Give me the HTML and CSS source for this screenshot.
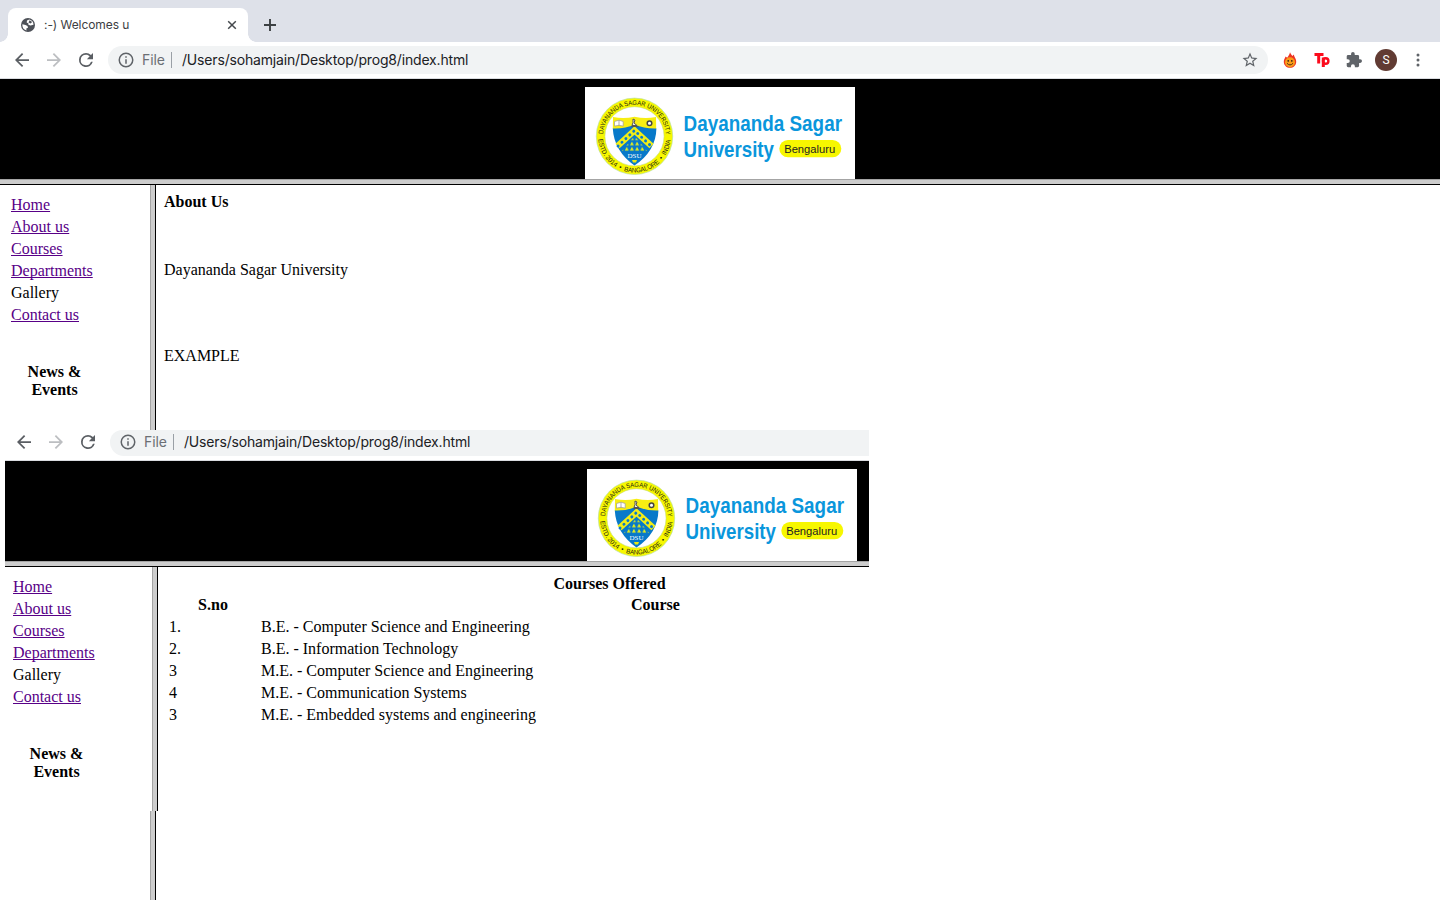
FILE: index.html
```html
<!DOCTYPE html>
<html lang="en">
<head>
<meta charset="utf-8">
<title>:-) Welcomes u</title>
<link rel="stylesheet" href="styles.css">
</head>
<body>
<svg class="defs" width="0" height="0" aria-hidden="true">
  <defs>
    <pattern id="dots" width="5.2" height="5.2" patternUnits="userSpaceOnUse" patternTransform="translate(49.5 49)">
      <path d="M2.6 .5L4.500 4.200H.7z" fill="#e6ee1c"/>
    </pattern>
    <path id="arc-top" d="M18.1 49.3A31.4 31.4 0 0 1 80.9 49.3"/>
    <path id="arc-bottom" d="M13.3 49.3A36.2 36.2 0 0 0 85.7 49.3"/>
  </defs>
  <symbol id="back" viewBox="0 0 24 24"><path d="M20 11H7.83l5.59-5.59L12 4l-8 8 8 8 1.41-1.41L7.83 13H20z"/></symbol>
  <symbol id="forward" viewBox="0 0 24 24"><path d="M12 4l-1.41 1.41L16.17 11H4v2h12.17l-5.58 5.59L12 20l8-8z"/></symbol>
  <symbol id="reload" viewBox="0 0 24 24"><path d="M17.65 6.35A7.96 7.96 0 0 0 12 4a8 8 0 1 0 7.73 10h-2.08A6 6 0 1 1 12 6c1.66 0 3.14.69 4.22 1.78L13 11h7V4z"/></symbol>
  <symbol id="info" viewBox="0 0 24 24"><path d="M11 17h2v-6h-2zm1-15a10 10 0 1 0 0 20 10 10 0 0 0 0-20zm0 18a8 8 0 1 1 0-16 8 8 0 0 1 0 16zM11 9h2V7h-2z"/></symbol>
  <symbol id="crest" viewBox="0 0 270 92">
    <circle cx="49.5" cy="49.3" r="38.2" fill="#f7f700" stroke="#b9dfa0" stroke-width=".7"/>
    <circle cx="49.5" cy="49.3" r="29.6" fill="#fff" stroke="#c5dc70" stroke-width=".6"/>
    <path d="M28 30Q39 32 49.5 29.7Q60 32 71 30L71.2 42H27.8z" fill="#f7ee13"/>
    <path d="M27.8 41.5Q40 42 49.5 37.5Q60 42 71.4 41.5Q71 64 49.5 78.5Q29 64 27.8 41.5z" fill="#0879c9"/>
    <path d="M36 65L49.5 49L63 65z" fill="url(#dots)"/>
    <path d="M32.5 59L49.5 43.5L66.5 59" fill="none" stroke="#f0ed18" stroke-width="6.2"/>
    <path d="M33 59L49.5 43.5L66 59" fill="none" stroke="#0879c9" stroke-width="2.9" stroke-linecap="round" stroke-dasharray=".1 5.3"/>
    <path d="M29.5 34.5l4.5-1.3 4.2 1.3v4.6l-4.2-.8-4.5.8z" fill="#fff" stroke="#999" stroke-width=".7"/>
    <path d="M34 33.5v5" stroke="#777" stroke-width=".6"/>
    <path d="M46.3 39.5h7M48 32l2 1-1 3 3 2.500h-5l1-3z" fill="#eee" stroke="#555" stroke-width="1"/>
    <circle cx="64.5" cy="36.2" r="2.3" fill="#fff" stroke="#444" stroke-width="1.5"/>
    <path d="M47 73h5l-1 2.500h-3z" fill="#e8e915"/>
  </symbol>
</svg>

<div class="window">
  <div class="tabstrip">
    <div class="tab">
      <svg class="globe" viewBox="0 0 14 14"><circle cx="7" cy="7" r="7" fill="#4d5158"/><path d="M8.200 1.500L6 2.500 5.700 4.500 7.500 5.500 7.300 6.800 9.500 7.600 12.500 6.800A5.600 5.600 0 0 0 8.200 1.500zM1.400 6.300L4.500 7 6.500 8 7 9.700 5.300 10.500 5.500 12.400A5.600 5.600 0 0 1 1.400 6.300z" fill="#fff"/><path d="M8.600 2.300l2.600 1.800-1.700 1.500-2-1z" fill="#4d5158"/></svg>
      <span class="tab-title">:-) Welcomes u</span>
      <svg class="tab-close" viewBox="0 0 10 10"><path d="M1.200 1.200l7.600 7.600M8.800 1.200L1.200 8.800"/></svg>
    </div>
    <svg class="new-tab" viewBox="0 0 12 12"><path d="M6 0v12M0 6h12"/></svg>
  </div>
  <div class="toolbar">
    <svg class="nav"><use href="#back"/></svg>
    <svg class="nav dim"><use href="#forward"/></svg>
    <svg class="nav"><use href="#reload"/></svg>
    <div class="omnibox">
      <svg class="info"><use href="#info"/></svg>
      <span class="scheme">File</span>
      <span class="url">/Users/sohamjain/Desktop/prog8/index.html</span>
      <svg class="star" viewBox="0 0 24 24"><path d="M22 9.240l-7.190-.62L12 2 9.190 8.630 2 9.240l5.460 4.730L5.820 21 12 17.270 18.180 21l-1.630-7.030zM12 15.400l-3.760 2.270 1-4.280-3.320-2.880 4.380-.38L12 6.100l1.710 4.040 4.380.38-3.320 2.880 1 4.280z"/></svg>
    </div>
    <div class="extensions">
      <svg width="16" height="16" viewBox="0 0 16 16"><path d="M8 .3C8.600 2 9.500 2.500 10.300 4L12 2.500C11.800 5 14.500 6.500 14.200 10 14 13.500 11.300 15.800 8 15.800S2 13.500 1.800 10C1.700 7.500 3 6.500 3.600 4.500L5.200 5.800C6.300 4 7.500 2.800 8 .3z" fill="#ee3423"/><circle cx="8" cy="10.300" r="5" fill="#f99b18"/><path d="M5 11.300Q8 14.500 11 11.300" fill="none" stroke="#543018" stroke-width="1"/><path d="M6.200 7.900v1.800M9.800 7.900v1.800" stroke="#35211a" stroke-width="1.300"/></svg>
      <svg width="16" height="16" viewBox="0 0 16 16"><path d="M.5 2.500H9.500M4.700 2.500V11.500M9.300 5.500V15" fill="none" stroke="#fb0b1c" stroke-width="3"/><circle cx="11.700" cy="9" r="2.700" fill="none" stroke="#fb0b1c" stroke-width="2.400"/></svg>
      <svg width="16" height="16" viewBox="1 1 22 22" fill="#5f6368"><path d="M20.500 11H19V7a2 2 0 0 0-2-2h-4V3.500a2.500 2.500 0 0 0-5 0V5H4a2 2 0 0 0-2 2v3.800h1.500a2.700 2.700 0 0 1 0 5.400H2V20a2 2 0 0 0 2 2h3.800v-1.500a2.700 2.700 0 0 1 5.400 0V22H17a2 2 0 0 0 2-2v-4h1.500a2.500 2.500 0 0 0 0-5z"/></svg>
      <span class="avatar">S</span>
      <svg class="menu" viewBox="0 0 4 14"><circle cx="2" cy="2" r="1.500"/><circle cx="2" cy="7" r="1.500"/><circle cx="2" cy="12" r="1.500"/></svg>
    </div>
  </div>

  <header class="banner">
    <svg class="logo" viewBox="0 0 270 92">
      <use href="#crest"/>
      <text class="dsu" x="42.500" y="70.800" textLength="14">DSU</text>
      <text class="ring-text"><textPath href="#arc-top" startOffset="2" textLength="95" lengthAdjust="spacingAndGlyphs">DAYANANDA SAGAR UNIVERSITY</textPath></text>
      <text class="ring-text"><textPath href="#arc-bottom" startOffset="3" textLength="107" lengthAdjust="spacingAndGlyphs">ESTD. 2014 &#160;•&#160; BANGALORE &#160;•&#160; INDIA</textPath></text>
      <text class="logo-name" x="98.500" y="43.700" textLength="158.500" lengthAdjust="spacingAndGlyphs">Dayananda Sagar</text>
      <text class="logo-name" x="98.500" y="70" textLength="90.500" lengthAdjust="spacingAndGlyphs">University</text>
      <rect x="194.300" y="53" width="62" height="17.300" rx="8.650" fill="#f7f700"/>
      <text class="logo-city" x="199.200" y="65.700" textLength="51" lengthAdjust="spacingAndGlyphs">Bengaluru</text>
    </svg>
  </header>
  <div class="frames">
    <nav class="sidebar">
      <ul>
        <li><a href="#">Home</a></li>
        <li><a href="#">About us</a></li>
        <li><a href="#">Courses</a></li>
        <li><a href="#">Departments</a></li>
        <li>Gallery</li>
        <li><a href="#">Contact us</a></li>
      </ul>
      <h4>News &amp;<br>Events</h4>
    </nav>
    <main class="content">
      <b>About Us</b>
      <p class="name">Dayananda Sagar University</p>
      <p class="example">EXAMPLE</p>
    </main>
  </div>
</div>

<section class="window inset">
  <div class="toolbar">
    <svg class="nav"><use href="#back"/></svg>
    <svg class="nav dim"><use href="#forward"/></svg>
    <svg class="nav"><use href="#reload"/></svg>
    <div class="omnibox">
      <svg class="info"><use href="#info"/></svg>
      <span class="scheme">File</span>
      <span class="url">/Users/sohamjain/Desktop/prog8/index.html</span>
    </div>
  </div>
  <header class="banner">
    <svg class="logo" viewBox="0 0 270 92">
      <use href="#crest"/>
      <text class="dsu" x="42.500" y="70.800" textLength="14">DSU</text>
      <text class="ring-text"><textPath href="#arc-top" startOffset="2" textLength="95" lengthAdjust="spacingAndGlyphs">DAYANANDA SAGAR UNIVERSITY</textPath></text>
      <text class="ring-text"><textPath href="#arc-bottom" startOffset="3" textLength="107" lengthAdjust="spacingAndGlyphs">ESTD. 2014 &#160;•&#160; BANGALORE &#160;•&#160; INDIA</textPath></text>
      <text class="logo-name" x="98.500" y="43.700" textLength="158.500" lengthAdjust="spacingAndGlyphs">Dayananda Sagar</text>
      <text class="logo-name" x="98.500" y="70" textLength="90.500" lengthAdjust="spacingAndGlyphs">University</text>
      <rect x="194.300" y="53" width="62" height="17.300" rx="8.650" fill="#f7f700"/>
      <text class="logo-city" x="199.200" y="65.700" textLength="51" lengthAdjust="spacingAndGlyphs">Bengaluru</text>
    </svg>
  </header>
  <div class="frames">
    <nav class="sidebar">
      <ul>
        <li><a href="#">Home</a></li>
        <li><a href="#">About us</a></li>
        <li><a href="#">Courses</a></li>
        <li><a href="#">Departments</a></li>
        <li>Gallery</li>
        <li><a href="#">Contact us</a></li>
      </ul>
      <h4>News &amp;<br>Events</h4>
    </nav>
    <main class="content">
      <table>
        <caption>Courses Offered</caption>
        <tr><th class="num">S.no</th><th>Course</th></tr>
        <tr><td>1.</td><td>B.E. - Computer Science and Engineering</td></tr>
        <tr><td>2.</td><td>B.E. - Information Technology</td></tr>
        <tr><td>3</td><td>M.E. - Computer Science and Engineering</td></tr>
        <tr><td>4</td><td>M.E. - Communication Systems</td></tr>
        <tr><td>3</td><td>M.E. - Embedded systems and engineering</td></tr>
      </table>
    </main>
  </div>
</section>
</body>
</html>
```
FILE: styles.css
```css
* { box-sizing: border-box; }
body {
  margin: 0;
  width: 1440px;
  height: 900px;
  overflow: hidden;
  position: relative;
  background: #fff;
  color: #000;
  font: 16px/18px "Liberation Serif", "Times New Roman", serif;
}
.defs { position: absolute; }
svg { display: block; flex: none; }

.window {
  display: flex;
  flex-direction: column;
  height: 900px;
  background: #fff;
}

/* tab strip */
.tabstrip {
  display: flex;
  align-items: flex-end;
  height: 42px;
  padding-left: 8px;
  background: #dee1e9;
}
.tab {
  position: relative;
  display: flex;
  align-items: center;
  width: 240px;
  height: 34px;
  padding: 0 11px 0 13px;
  border-radius: 8px 8px 0 0;
  background: #fff;
}
.tab::before, .tab::after {
  content: "";
  position: absolute;
  bottom: 0;
  width: 8px;
  height: 8px;
}
.tab::before { left: -8px; background: radial-gradient(circle at 0 0, transparent 7.5px, #fff 8px); }
.tab::after { right: -8px; background: radial-gradient(circle at 100% 0, transparent 7.5px, #fff 8px); }
.globe { width: 14px; height: 14px; }
.tab-title {
  margin-left: 9px;
  font: 12px/16px Inter, sans-serif;
  letter-spacing: -.06px;
  color: #3c4043;
}
.tab-close { width: 10px; height: 10px; margin-left: auto; stroke: #45494d; stroke-width: 1.5; }
.new-tab { width: 12px; height: 12px; margin: 0 0 11px 16px; stroke: #3c4043; stroke-width: 1.9; }

/* toolbar */
.toolbar {
  display: flex;
  align-items: center;
  flex: none;
  height: 37px;
  padding: 0 0 1px 11px;
  border-bottom: 1px solid #dadce0;
}
.nav { width: 22px; height: 22px; margin-right: 10px; padding: .5px; fill: #5a5e63; }
.nav.dim { fill: #bcbec1; }
.omnibox {
  display: flex;
  align-items: center;
  width: 1160px;
  height: 28px;
  margin-left: 1px;
  padding: 0 9px;
  border-radius: 14px;
  background: #f1f3f4;
  font: 14px/18px Inter, sans-serif;
}
.info { width: 18px; height: 18px; fill: #5f6368; }
.scheme {
  width: 30px;
  height: 16px;
  line-height: 16px;
  margin-left: 7px;
  border-right: 1px solid #9aa0a6;
  color: #6b6f74;
  letter-spacing: -.1px;
}
.url { margin-left: 10px; color: #202124; letter-spacing: -.17px; }
.star { width: 18px; height: 18px; margin-left: auto; fill: #5f6368; }
.extensions { display: flex; align-items: center; gap: 16px; margin-left: 14px; }
.avatar {
  width: 22px;
  height: 22px;
  margin: 0 -3px;
  border-radius: 50%;
  background: #613b33;
  color: #fff;
  font: 12px/22px Roboto, sans-serif;
  text-align: center;
}
.menu { width: 4px; height: 14px; margin-left: 6px; fill: #5f6368; }

/* page frames */
.banner {
  display: flex;
  justify-content: center;
  flex: none;
  height: 106px;
  padding-top: 8px;
  background: linear-gradient(#000 100px, #a4a4a4 100px, #a4a4a4 101px, #cdcdcd 101px, #cdcdcd 105px, #000 105px);
}
.logo { width: 270px; height: 92px; background: #fff; }
.logo-name { font: bold 22.5px "Liberation Sans", Arial, sans-serif; fill: #0a96dc; }
.logo-city { font: 11.5px "Liberation Sans", Arial, sans-serif; fill: #222; }
.ring-text { font: 6.7px "Liberation Sans", Arial, sans-serif; fill: #1c1c10; }
.dsu { font: 7px "Liberation Serif", serif; fill: #fff; }

.frames { display: flex; flex: 1; min-height: 0; }
.sidebar {
  width: 156px;
  flex: none;
  padding: 10px 0 0 11px;
  background: linear-gradient(90deg, #fff 150px, #a4a4a4 150px, #a4a4a4 151px, #cdcdcd 151px, #cdcdcd 155px, #000 155px);
}
.sidebar ul { margin: 0; padding: 0; list-style: none; }
.sidebar li { height: 22px; line-height: 20px; }
.sidebar a { color: #580087; text-decoration-skip-ink: none; }
.sidebar h4 { width: 87px; margin: 36px 0 0; font-size: 16px; text-align: center; }
.content { flex: 1; padding: 8px; }
.content p { margin: 0; }
.content .name { margin-top: 50px; }
.content .example { margin-top: 68px; }

/* smaller window laid over the first */
.inset {
  position: absolute;
  left: 5px;
  top: 430px;
  width: 864px;
  height: 381px;
  overflow: hidden;
}
.inset .toolbar { height: 31px; padding: 0 0 4px 8px; }
.inset .omnibox { flex: none; width: 759px; height: 26px; border-radius: 12px 0 0 14px; padding-bottom: 2px; }
.inset .nav { position: relative; top: -1px; }
.inset .banner { justify-content: flex-start; padding-left: 582px; }
.inset .sidebar {
  width: 153px;
  padding-left: 8px;
  background: linear-gradient(90deg, #fff 147px, #a4a4a4 147px, #a4a4a4 148px, #cdcdcd 148px, #cdcdcd 152px, #000 152px);
}
table { width: 887px; table-layout: fixed; border-spacing: 2px; line-height: 18px; }
caption { font-weight: bold; }
th, td { padding: 1px; }
.num { width: 90px; }
```
